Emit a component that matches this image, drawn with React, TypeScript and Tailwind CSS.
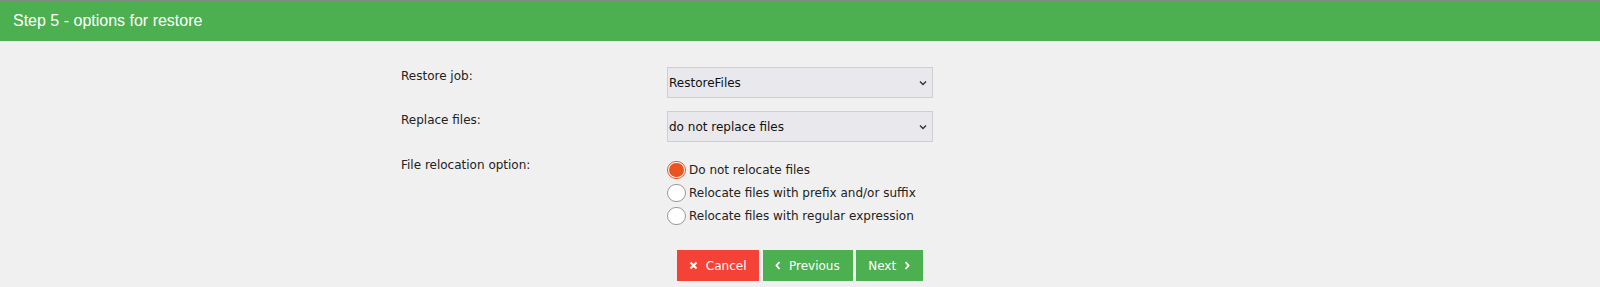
import React from "react";

function Radio({ checked }: { checked?: boolean }) {
  if (checked) {
    return (
      <span className="flex h-[18px] w-[19px] items-center justify-center rounded-full border border-[#e95420] bg-white p-[1px]">
        <span className="block h-full w-full rounded-full bg-[#e95420]" />
      </span>
    );
  }
  return <span className="block h-[18px] w-[19px] rounded-full border border-[#9a9a9a] bg-white" />;
}

function Select({ value }: { value: string }) {
  return (
    <div className="flex h-[31px] w-[266px] items-center justify-between border border-[#cfcfcf] bg-[#e9e8ed] pl-[1px] pr-[5px] text-[12px] text-[#111]">
      <span>{value}</span>
      <svg width="8" height="6" viewBox="0 0 8 6" className="mt-[1px]">
        <path d="M1 1.5 L4 4.5 L7 1.5" fill="none" stroke="#333" strokeWidth="1.4" />
      </svg>
    </div>
  );
}

export default function App() {
  return (
    <div className="min-h-screen bg-[#f0f0f0] font-['DejaVu_Sans',sans-serif] text-[12px] text-[#222]">
      <div className="flex h-[41px] items-center border-t border-[#7f8c7f] bg-[#4caf50] pl-[13px] font-['Liberation_Sans',Arial,sans-serif] text-[16px] text-white">
        Step 5 - options for restore
      </div>
      <div className="mx-auto w-[798px] pt-[26px]">
        <div className="grid grid-cols-[266px_1fr] gap-y-[13px]">
          <div className="leading-[18px]">Restore job:</div>
          <Select value="RestoreFiles" />
          <div className="leading-[18px]">Replace files:</div>
          <Select value="do not replace files" />
          <div className="pt-[1px] leading-[18px]">File relocation option:</div>
          <div className="flex flex-col pt-[3px]">
            {[
              ["Do not relocate files", true],
              ["Relocate files with prefix and/or suffix", false],
              ["Relocate files with regular expression", false],
            ].map(([label, checked]) => (
              <div key={label as string} className="flex h-[23px] items-center gap-[3px]">
                <Radio checked={checked as boolean} />
                <span>{label as string}</span>
              </div>
            ))}
          </div>
        </div>
        <div className="mt-[23px] flex justify-center gap-[3.5px] text-white">
          <button className="flex h-[31px] items-center gap-[8px] bg-[#f44336] pl-[12px] pr-[13px]">
            <svg width="9" height="9" viewBox="0 0 9 9">
              <path d="M1.5 1.5 L7.5 7.5 M7.5 1.5 L1.5 7.5" stroke="white" strokeWidth="2.2" />
            </svg>
            <span>Cancel</span>
          </button>
          <button className="flex h-[31px] items-center gap-[8px] bg-[#4caf50] pl-[12px] pr-[13px]">
            <svg width="6" height="9" viewBox="0 0 6 9">
              <path d="M4.5 1 L1.5 4.5 L4.5 8" fill="none" stroke="white" strokeWidth="1.9" />
            </svg>
            <span>Previous</span>
          </button>
          <button className="flex h-[31px] items-center gap-[8px] bg-[#4caf50] pl-[12px] pr-[13px]">
            <span>Next</span>
            <svg width="6" height="9" viewBox="0 0 6 9">
              <path d="M1.5 1 L4.5 4.5 L1.5 8" fill="none" stroke="white" strokeWidth="1.9" />
            </svg>
          </button>
        </div>
      </div>
    </div>
  );
}
